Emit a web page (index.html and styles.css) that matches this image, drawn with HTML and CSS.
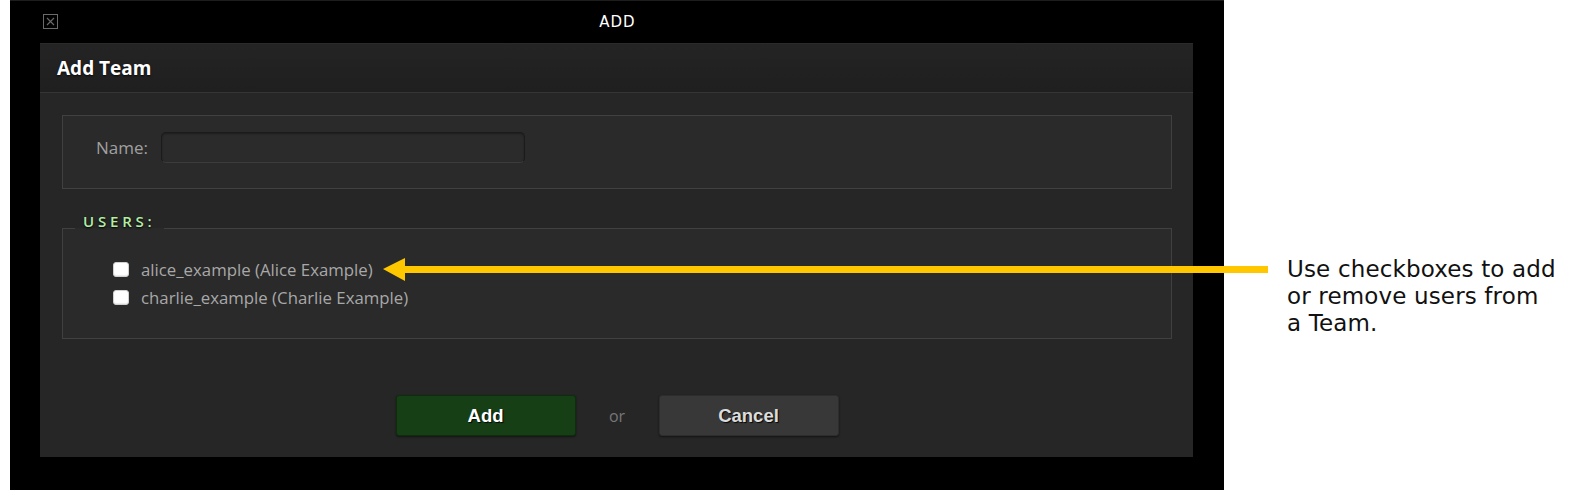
FILE: index.html
```
<!DOCTYPE html>
<html>
<head>
<meta charset="utf-8">
<link rel="stylesheet" href="styles.css">
</head>
<body>
<div class="stage">
  <div class="window">
    <div class="titlebar">
      <svg class="close" width="15" height="15" viewBox="0 0 15 15">
        <rect x="0.5" y="0.5" width="14" height="14" fill="none" stroke="#6a6a6a" stroke-width="1"/>
        <path d="M4 4 L11 11 M11 4 L4 11" stroke="#6a6a6a" stroke-width="1.1" fill="none"/>
      </svg>
      <div class="title">ADD</div>
      <div></div>
    </div>
    <div class="panel">
      <div class="panel-head"><h2>Add Team</h2></div>
      <div class="panel-body">
        <fieldset class="box name-box">
          <div class="name-row">
            <label class="name-label" for="team-name">Name:</label>
            <input class="text-input" id="team-name" type="text">
          </div>
        </fieldset>
        <fieldset class="box users-box">
          <legend>USERS:</legend>
          <div class="user-list">
            <label class="user"><input class="check" type="checkbox"><span>alice_example (Alice Example)</span></label>
            <label class="user"><input class="check" type="checkbox"><span>charlie_example (Charlie Example)</span></label>
          </div>
        </fieldset>
        <div class="actions">
          <button class="btn btn-add">Add</button>
          <span class="or">or</span>
          <button class="btn btn-cancel">Cancel</button>
        </div>
      </div>
    </div>
  </div>
  <p class="note">Use checkboxes to add<br>or remove users from<br>a Team.</p>
  <svg class="arrow" width="885" height="25" viewBox="0 0 885 25">
    <polygon points="0,12 22,1 22,24" fill="#ffc700"/>
    <rect x="21" y="9" width="864" height="7" fill="#ffc700"/>
  </svg>
</div>
</body>
</html>
```
FILE: styles.css
```
* { box-sizing: border-box; }
html, body { margin: 0; padding: 0; background: #fff; }
.stage {
  position: relative;
  width: 1580px;
  height: 490px;
  display: flex;
  align-items: flex-start;
  overflow: hidden;
}
.window {
  flex: 0 0 auto;
  margin-left: 10px;
  width: 1214px;
  height: 490px;
  background: #000;
  border-top: 1px solid #1d1d1d;
  display: flex;
  flex-direction: column;
}
.titlebar {
  height: 42px;
  display: grid;
  grid-template-columns: 1fr auto 1fr;
  align-items: start;
  padding-top: 13px;
}
.close { margin-left: 33px; display: block; }
.title {
  font-family: "DejaVu Sans", sans-serif;
  font-size: 15px;
  line-height: 16px;
  letter-spacing: 1px;
  color: #fff;
  padding-left: 1px;
}
.panel {
  margin: 0 31px 0 30px;
  background: #262626;
  border-top: 1px solid #2a2a2a;
}
.panel-head {
  height: 49px;
  background: linear-gradient(#242424, #1f1f1f);
  border-bottom: 1px solid #353535;
  padding: 1px 0 0 17px;
}
.panel-head h2 {
  margin: 0;
  font-family: "Open Sans", sans-serif;
  font-weight: 700;
  font-size: 19px;
  line-height: 46px;
  color: #fff;
  text-shadow: 0 1px 2px rgba(0,0,0,.8);
}
.panel-body {
  padding: 22px 21px 21px 22px;
  font-family: "Open Sans", sans-serif;
}
.box {
  margin: 0;
  border: 1px solid #404040;
  background: #2a2a2a;
  min-width: 0;
}
.name-box { padding: 16px 0 25px 33px; }
.name-row { display: flex; align-items: center; }
.name-label {
  width: 65px;
  font-size: 17px;
  color: #a0a0a0;
}
.text-input {
  width: 364px;
  height: 31px;
  margin: 0;
  background: #2b2b2b;
  border: 1px solid #1b1b1b;
  border-bottom-color: #3c3c3c;
  border-radius: 5px;
  box-shadow: inset 0 1px 2px rgba(0,0,0,.35);
  outline: none;
}
.users-box {
  margin-top: 23px;
  padding: 0;
}
.users-box legend {
  margin-left: 12px;
  padding: 0 8px 14px 8px;
  font-size: 15px;
  font-weight: 600;
  line-height: 18px;
  letter-spacing: 3.8px;
  color: #b3eea4;
  text-shadow: 0 1px 2px rgba(0,0,0,.9);
}
.user-list {
  padding: 11px 0 27px 50px;
  display: flex;
  flex-direction: column;
}
.user {
  height: 28px;
  display: flex;
  align-items: center;
  font-size: 16.8px;
  color: #a8a8a8;
}
.check {
  appearance: none;
  -webkit-appearance: none;
  width: 16px;
  height: 15px;
  margin: 0 12px 0 0;
  background: #fff;
  border: 1px solid #d0d0d0;
  border-radius: 3px;
  box-shadow: inset 0 -1px 1px rgba(0,0,0,.08);
}
.actions {
  margin-top: 56px;
  display: flex;
  justify-content: center;
  align-items: center;
}
.btn {
  width: 180px;
  height: 41px;
  border-radius: 3px;
  font-family: "Liberation Sans", Arial, sans-serif;
  font-weight: 700;
  font-size: 18.5px;
  text-shadow: 1px 1px 1px rgba(0,0,0,.9);
  box-shadow: 0 1px 2px rgba(0,0,0,.5);
  cursor: pointer;
}
.btn-add {
  background: #163f16;
  border: 1px solid #0e2c0e;
  color: #fff;
}
.btn-cancel {
  background: #383838;
  border: 1px solid #2d2d2d;
  color: #dcdcdc;
}
.or {
  width: 83px;
  text-align: center;
  font-size: 16px;
  color: #777;
}
.note {
  flex: 0 0 auto;
  margin: 256px 0 0 63px;
  font-family: "DejaVu Sans", Verdana, sans-serif;
  font-size: 23px;
  line-height: 27px;
  letter-spacing: 0.15px;
  color: #111;
  white-space: nowrap;
}
.arrow {
  position: absolute;
  left: 383px;
  top: 257px;
}
```
